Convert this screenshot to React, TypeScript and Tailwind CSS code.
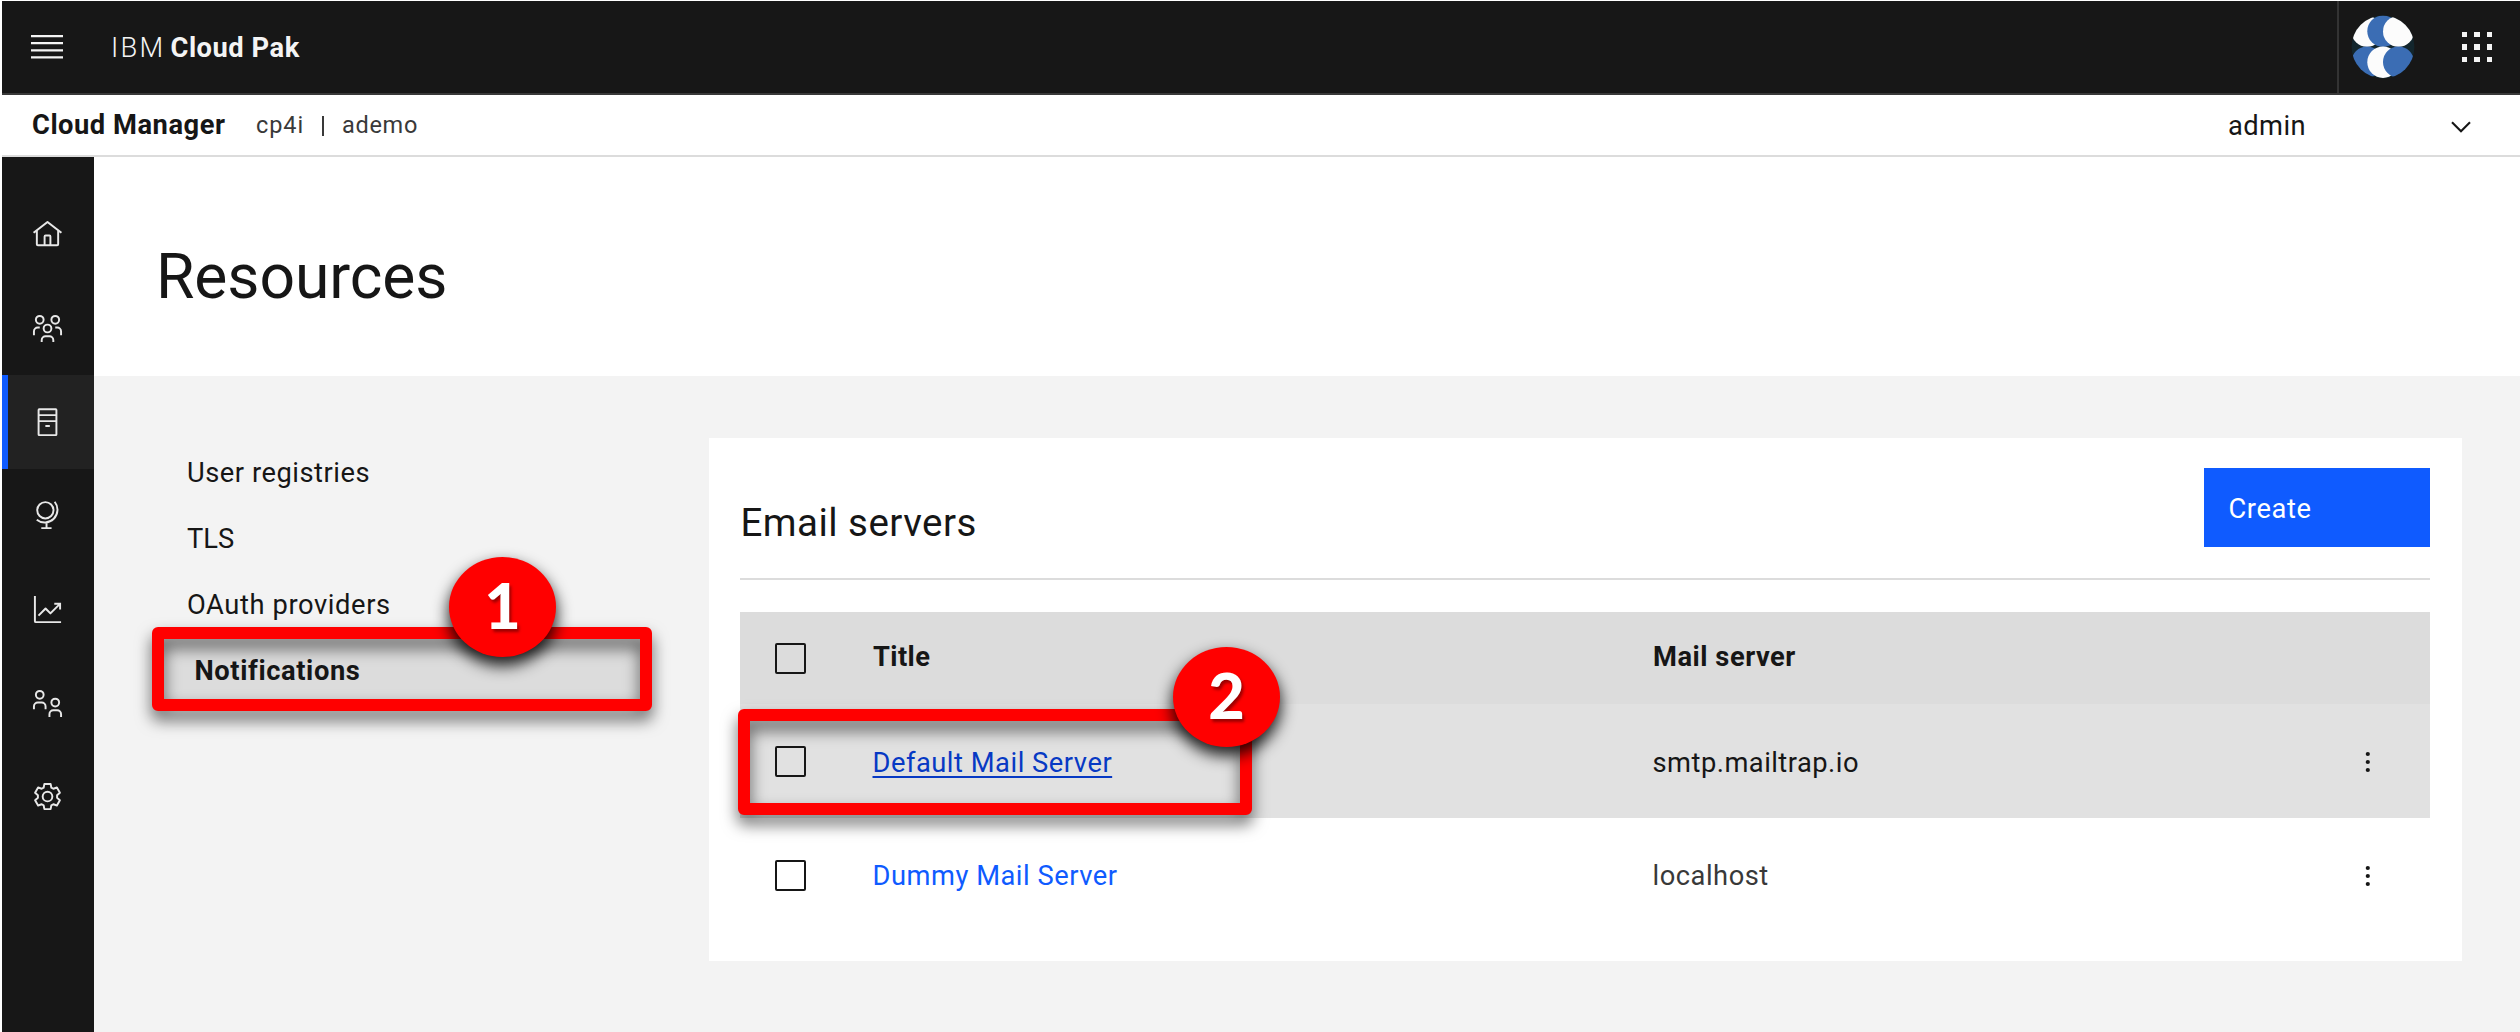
import type { ReactNode } from "react";

function NavIcon({ children }: { children: ReactNode }) {
  return (
    <svg viewBox="0 0 32 32" className="size-[31px]" fill="none" stroke="#e8e8e8" strokeWidth={2}>
      {children}
    </svg>
  );
}

const navItems: { name: string; active?: boolean; icon: ReactNode }[] = [
  {
    name: "Home",
    icon: (
      <path
        fill="#e8e8e8"
        stroke="none"
        d="M16.61 2.21a1.01 1.01 0 0 0-1.24 0L1 13.42l1.24 1.57L4 13.62V26a2 2 0 0 0 2 2h20a2 2 0 0 0 2-2V13.63L29.76 15 31 13.43ZM18 26h-4v-8h4Zm2 0v-8a2 2 0 0 0-2-2h-4a2 2 0 0 0-2 2v8H6V12.06l10-7.79 10 7.8V26Z"
      />
    ),
  },
  {
    name: "Members",
    icon: (
      <>
        <circle cx="8" cy="7" r="4" />
        <circle cx="24" cy="7" r="4" />
        <circle cx="16" cy="16" r="4" />
        <path d="M8 15H6a4 4 0 0 0-4 4v4M24 15h2a4 4 0 0 1 4 4v4M10 30v-2a4 4 0 0 1 4-4h4a4 4 0 0 1 4 4v2" />
      </>
    ),
  },
  {
    name: "Resources",
    active: true,
    icon: (
      <>
        <rect x="6.8" y="2.4" width="18.4" height="26.6" rx="0.6" />
        <path d="M7 8.4h18M7 14.6h18M13.8 19.7h4.6" />
      </>
    ),
  },
  {
    name: "Availability zones",
    icon: (
      <>
        <circle cx="13.8" cy="10.6" r="8.4" />
        <path d="M23.4 1.8A13.2 13.2 0 0 1 4.9 20.4M15 23.8v4.8M9.6 29h10.6" />
      </>
    ),
  },
  {
    name: "Analytics",
    icon: (
      <path
        fill="#e8e8e8"
        stroke="none"
        d="M4 2H2v26a2 2 0 0 0 2 2h26v-2H4ZM30 9h-7v2h3.59L19 18.59l-4.29-4.3a1 1 0 0 0-1.42 0L6 21.59 7.41 23 14 16.41l4.29 4.3a1 1 0 0 0 1.42 0L28 12.41V16h2Z"
      />
    ),
  },
  {
    name: "Provider organizations",
    icon: (
      <>
        <circle cx="8" cy="7" r="4" />
        <circle cx="24" cy="15" r="4" />
        <path d="M2 22v-3a4 4 0 0 1 4-4h4a4 4 0 0 1 4 4v3M18 30v-3a4 4 0 0 1 4-4h4a4 4 0 0 1 4 4v3" />
      </>
    ),
  },
  {
    name: "Settings",
    icon: (
      <>
        <path
          strokeLinejoin="round"
          d="M12.8 3h6.4l.8 3.9 2 1.1 3.7-1.3 3.1 5.4-2.9 2.6v2.6l2.9 2.6-3.1 5.4-3.7-1.3-2 1.1-.8 3.9h-6.4l-.8-3.9-2-1.1-3.7 1.3-3.1-5.4 2.9-2.6v-2.6l-2.9-2.6 3.1-5.4L10 8l2-1.1Z"
        />
        <circle cx="16" cy="16" r="5" />
      </>
    ),
  },
];

function Checkbox() {
  return <div className="ml-[35px] size-[31px] rounded-[2px] border-2 border-[#161616]" />;
}

function Kebab() {
  return (
    <svg viewBox="0 0 6 22" className="mt-[2px] ml-[58px] h-[22px] w-[6px]" fill="#161616">
      <circle cx="2.8" cy="3" r="2.1" />
      <circle cx="2.8" cy="11" r="2.1" />
      <circle cx="2.8" cy="19" r="2.1" />
    </svg>
  );
}

function Badge({ label, className }: { label: string; className: string }) {
  return (
    <div
      className={
        "absolute flex h-[100px] w-[107px] items-center justify-center rounded-[50%] bg-[#ff0000] font-['Lato',sans-serif] text-[63px] leading-none font-black tracking-normal text-white shadow-[0_8px_15px_1px_rgba(0,0,0,0.85)] [text-shadow:2px_3px_3px_rgba(90,0,0,0.6)] " +
        className
      }
    >
      <span className="pb-[6px]">{label}</span>
    </div>
  );
}

const columns = "grid grid-cols-[131px_780px_656px_1fr] items-center";

export default function App() {
  return (
    <div className="relative h-[1032px] w-[2520px] overflow-hidden bg-white pt-px pl-[2px] font-['Roboto',sans-serif] text-[27.3px] tracking-[0.52px] text-[#161616]">
      <header className="flex h-[94px] items-center border-b-2 border-[#393939] bg-[#171717] text-[#f4f4f4]">
        <svg viewBox="0 0 32 26" className="ml-[29px] h-[26px] w-[32px]" stroke="#f4f4f4" strokeWidth="2.2">
          <path d="M0 2.1h32M0 9.2h32M0 16.3h32M0 23.4h32" />
        </svg>
        <div className="ml-[48px] flex pt-[2px] leading-8">
          <span className="w-[59.5px] font-light tracking-[2.2px]">IBM</span>
          <span className="font-bold">Cloud Pak</span>
        </div>
        <div className="ml-auto flex h-full items-center border-l-2 border-[#333333]">
          <svg viewBox="0 0 64 64" className="ml-[12px] size-[64px]">
            <clipPath id="avatar">
              <circle cx="32" cy="32" r="31.4" />
            </clipPath>
            <g clipPath="url(#avatar)">
              <rect width="64" height="64" fill="#13262d" />
              <circle cx="16" cy="16.4" r="15.5" fill="#fcfcfc" />
              <circle cx="32" cy="16.2" r="15.7" fill="#3b6db4" />
              <circle cx="47.5" cy="16.4" r="15.5" fill="#fcfcfc" />
              <circle cx="16" cy="47" r="15.5" fill="#3b6db4" />
              <circle cx="32" cy="47.2" r="15.7" fill="#fcfcfc" />
              <circle cx="47.5" cy="47" r="15.5" fill="#3b6db4" />
            </g>
          </svg>
          <div className="mr-[28px] ml-[47px] grid grid-cols-3 gap-[7px]">
            {Array.from({ length: 9 }, (_, i) => (
              <div key={i} className="size-[5.3px] bg-[#f4f4f4]" />
            ))}
          </div>
        </div>
      </header>

      <div className="flex h-[62px] items-center border-b-2 border-[#dcdcdc] pt-px">
        <div className="ml-[30px] w-[194px] whitespace-nowrap font-bold">Cloud Manager</div>
        <div className="flex items-center text-[23.5px] text-[#393939]">
          <span className="ml-[30px] w-[66px] tracking-[0.9px]">cp4i</span>
          <span className="h-[20px] w-[2px] bg-[#393939]" />
          <span className="ml-[18px] tracking-[0.7px]">ademo</span>
        </div>
        <div className="ml-auto mr-[50px] flex items-center pt-[2px]">
          <span className="w-[223px] tracking-[0.4px]">admin</span>
          <svg viewBox="0 0 20 12" className="mr-[-1px] h-[12px] w-[20px]" fill="none" stroke="#161616" strokeWidth="2.1">
            <path d="M1 1.2l9 9 9-9" />
          </svg>
        </div>
      </div>

      <div className="flex h-[875px]">
        <nav className="w-[92px] shrink-0 bg-[#171717] pt-[31px]">
          {navItems.map((item) => (
            <a
              key={item.name}
              aria-label={item.name}
              className={
                item.active
                  ? "flex h-[93.7px] items-center justify-center border-l-6 border-[#0f5bff] bg-[#222222] pr-[7px]"
                  : "flex h-[93.7px] items-center justify-center pr-px"
              }
            >
              <NavIcon>{item.icon}</NavIcon>
            </a>
          ))}
        </nav>

        <main className="flex flex-1 flex-col bg-[#f3f3f3]">
          <div className="h-[219px] bg-white pt-[84px] pl-[62px]">
            <h1 className="text-[62.4px] leading-[72px] tracking-[-0.1px]">Resources</h1>
          </div>

          <div className="flex pt-[62px] pl-[62px]">
            <ul className="w-[492px] pt-[1.5px] leading-[66.3px]">
              <li className="pl-[31px]">User registries</li>
              <li className="pl-[31px] tracking-[0px]">TLS</li>
              <li className="pl-[31px] tracking-[0.6px]">OAuth providers</li>
              <li className="h-[66px] bg-[#dcdcdc] pl-[38.5px] font-bold tracking-[0.6px]">Notifications</li>
            </ul>

            <section className="ml-[61px] h-[523px] w-[1753px] bg-white pt-[30px] pr-[32px] pl-[31px]">
              <div className="flex h-[112px] items-start justify-between border-b-2 border-[#dcdcdc]">
                <h2 className="pt-[31px] pl-[0.5px] text-[38.5px] leading-[48px] tracking-[0.46px]">Email servers</h2>
                <button className="h-[79px] w-[226px] bg-[#0f5bff] pt-[3px] pl-[24.5px] text-left tracking-[0.6px] text-white">
                  Create
                </button>
              </div>

              <div className={columns + " mt-[32px] h-[92px] bg-[#dcdcdc] font-bold"}>
                <Checkbox />
                <div className="pb-[2px] pl-[2px] tracking-[0.4px]">Title</div>
                <div className="pb-[2px] pl-[2px]">Mail server</div>
              </div>
              <div className={columns + " h-[114px] bg-[#e1e1e1]"}>
                <Checkbox />
                <div className="pt-[4px] pl-[1.5px] text-[#0739c4] underline decoration-2 underline-offset-[4px] [text-decoration-skip-ink:none]">
                  Default Mail Server
                </div>
                <div className="pt-[4px] pl-[1.5px] tracking-[0.48px]">smtp.mailtrap.io</div>
                <Kebab />
              </div>
              <div className={columns + " h-[114px]"}>
                <Checkbox />
                <div className="pt-[3px] pl-[1.5px] text-[#0f5bff]">Dummy Mail Server</div>
                <div className="pt-[3px] pl-[1.5px] text-[#393939]">localhost</div>
                <Kebab />
              </div>
            </section>
          </div>
        </main>
      </div>

      {/* Numbered step callouts laid over the page */}
      <div className="absolute top-[627px] left-[152px] h-[84px] w-[500px] rounded-[6px] border-12 border-[#ff0000] drop-shadow-[0_9px_8px_rgba(0,0,0,0.6)]" />
      <Badge label="1" className="top-[557px] left-[449px]" />
      <div className="absolute top-[709px] left-[738px] h-[106px] w-[514px] rounded-[6px] border-12 border-[#ff0000] drop-shadow-[0_9px_8px_rgba(0,0,0,0.6)]" />
      <Badge label="2" className="top-[647px] left-[1173px]" />
    </div>
  );
}
